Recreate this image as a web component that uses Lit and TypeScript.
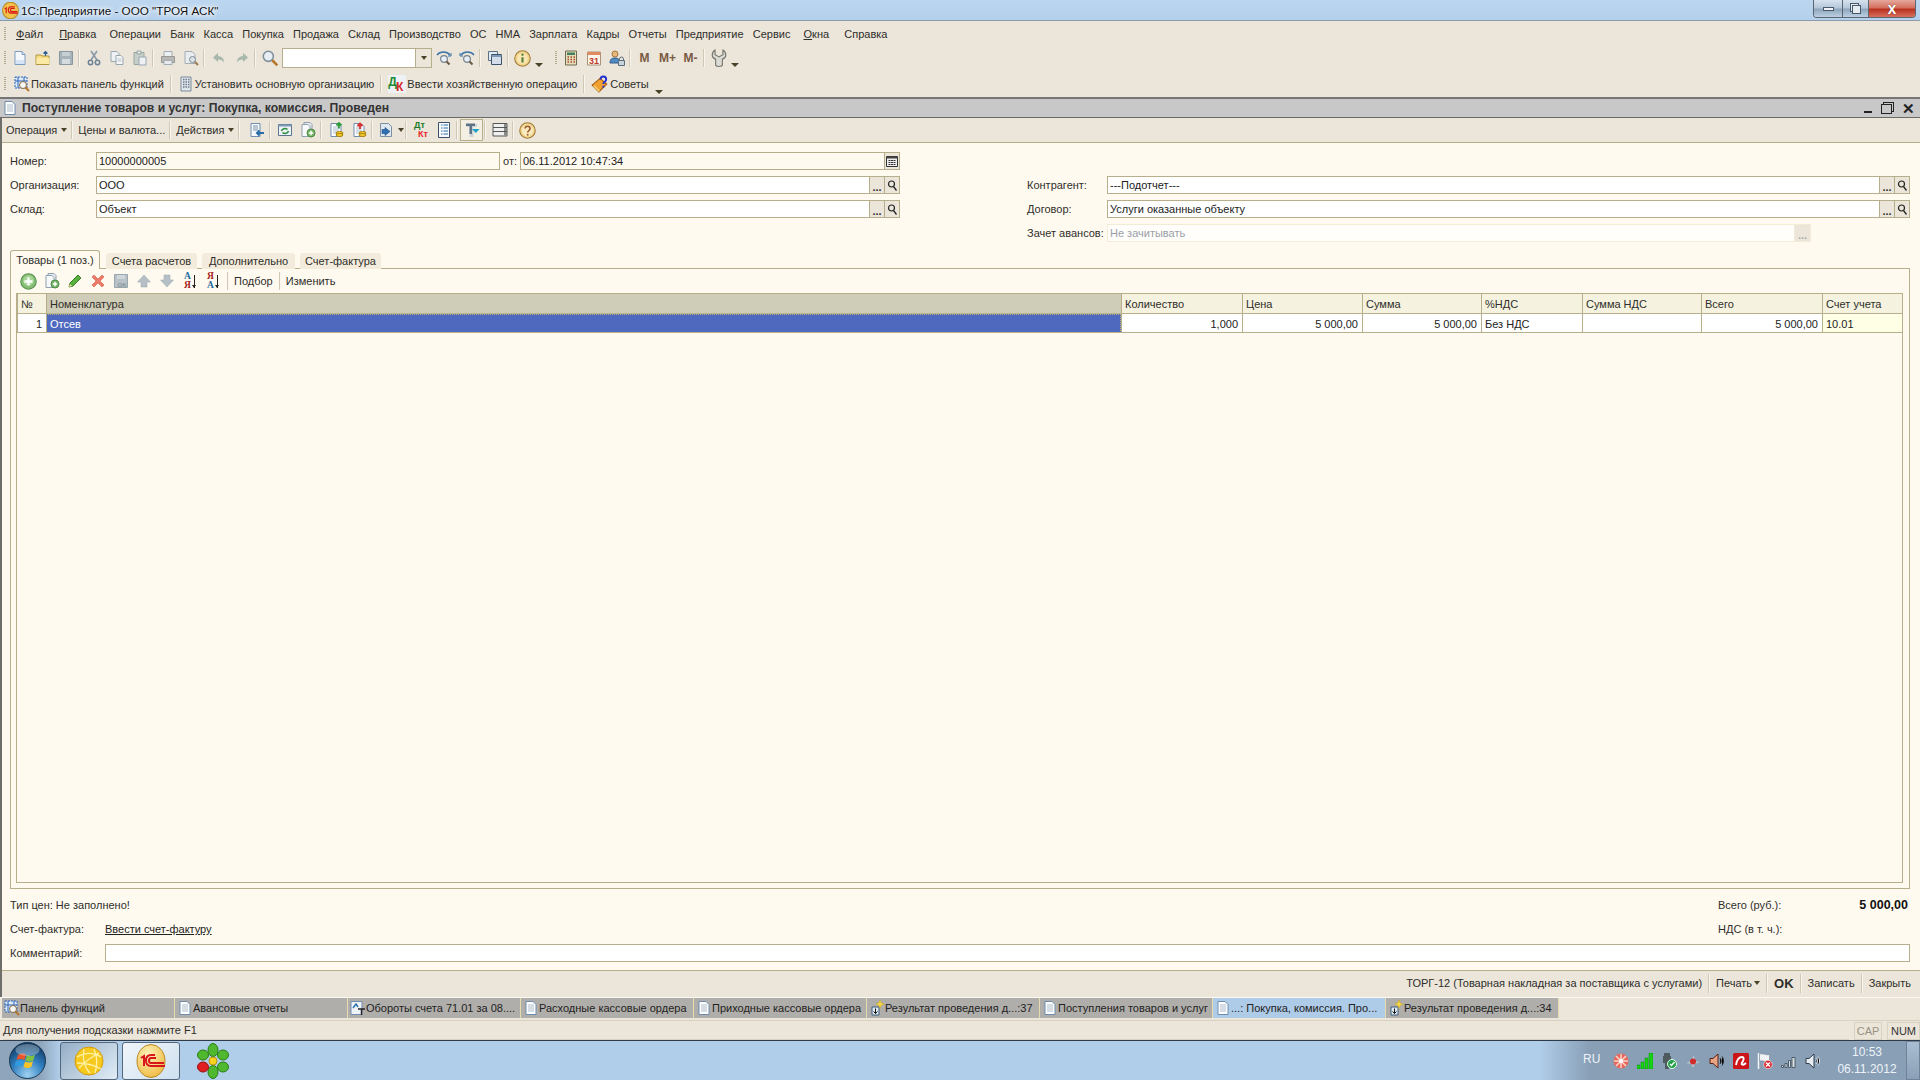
import { LitElement, html, css, svg, SVGTemplateResult } from 'lit';
import { customElement } from 'lit/decorators.js';

const ic = (body: SVGTemplateResult, size = 16) =>
  html`<svg width=${size} height=${size} viewBox="0 0 16 16" fill="none">${body}</svg>`;

const pageLines = svg`<path d="M3 1.5h7l3 3v10H3z" fill="#fdfeff" stroke="#6f8dae"/><path d="M5 5h6M5 7h6M5 9h6M5 11h6" stroke="#aebccb"/>`;
const coins = svg`<ellipse cx="11.5" cy="11" rx="3.5" ry="1.5" fill="#f3c92e" stroke="#a98510"/><ellipse cx="11.5" cy="13" rx="3.5" ry="1.5" fill="#f3c92e" stroke="#a98510"/>`;
const funcPanel = svg`<path d="M1 1h12v11H1z" fill="#dce9f8" stroke="#2a62b8" stroke-dasharray="2 1"/><path d="M4 1v11M10 1v11M1 5h12" stroke="#2a62b8"/><circle cx="9" cy="9" r="3.5" fill="#f4f6f8" stroke="#8a6a3a"/><path d="M11.5 11.5L15 15" stroke="#b5762a" stroke-width="2"/>`;
const magnifier = svg`<circle cx="6.5" cy="6.5" r="4.5" fill="#e7eef5" stroke="#7f8f9c" stroke-width="1.4"/><path d="M10 10l4.5 4.5" stroke="#b5762a" stroke-width="2.2"/>`;
const result = svg`<path d="M3 7h7v8H3z" fill="#dfe9f2" stroke="#3c5e80"/><path d="M6.5 8.5v5M4.5 11.5l2 2 2-2" stroke="#111"/><path d="M11 0l1.2 3 3 1.2-3 1.2L11 8.4 9.8 5.4l-3-1.2 3-1.2z" fill="#f6d84a" stroke="#c9a520" stroke-width=".5"/>`;

const icons = {
  newDoc: ic(svg`<path d="M3 1.5h7l3 3v10H3z" fill="#f4f8fd" stroke="#7d9cbd"/><path d="M10 1.5v3h3" fill="#cfe0f2" stroke="#7d9cbd"/><path d="M4 10h8v4H4z" fill="#d6e5f5"/>`),
  open: ic(svg`<path d="M1 5h5l1 1h7v8.5H1z" fill="#f6dd83" stroke="#b2963e"/><path d="M1.5 8h13v6H1.5z" fill="#fbe9a6"/><path d="M10.5 6V1.5M8.5 3.5l2-2 2 2" stroke="#2f5f8f" stroke-width="1.2"/>`),
  save: ic(svg`<path d="M1.5 1.5h13v13h-13z" fill="#a7b3ba" stroke="#8a979f"/><path d="M4 2h8v4H4z" fill="#c5ced3"/><path d="M4 9h8v5H4z" fill="#d4dbdf"/>`),
  cut: ic(svg`<path d="M5 1l6 9M11 1L5 10" stroke="#8a9aa8" stroke-width="1.6"/><circle cx="4.5" cy="12.5" r="2.2" stroke="#6e8296" stroke-width="1.5"/><circle cx="11.5" cy="12.5" r="2.2" stroke="#6e8296" stroke-width="1.5"/>`),
  copy: ic(svg`<path d="M2 1.5h6l2 2v8H2z" fill="#eef1f3" stroke="#98a6b0"/><path d="M7 5.5h5l2 2v7H7z" fill="#f5f7f8" stroke="#98a6b0"/><path d="M8.5 9h4M8.5 11h4" stroke="#b5c0c8"/>`),
  paste: ic(svg`<path d="M2 2.5h10v12H2z" fill="#c7cfc9" stroke="#98a6a6"/><path d="M5 1h4v3H5z" fill="#e2e6e6" stroke="#98a6a6"/><path d="M7 7h7v8H7z" fill="#eef2f4" stroke="#98a6b0"/>`),
  print: ic(svg`<path d="M4 1.5h8v5H4z" fill="#eceff1" stroke="#a3adb3"/><path d="M1.5 6.5h13v6h-13z" fill="#b9b7b4" stroke="#99999a"/><path d="M4 10.5h8v4H4z" fill="#e8eaec" stroke="#a3adb3"/>`),
  preview: ic(svg`<path d="M2 1.5h7l3 3v9H2z" fill="#e9edf0" stroke="#a3adb3"/><circle cx="9.5" cy="9.5" r="3" fill="#dbe3e8" stroke="#7d8a93"/><path d="M12 12l3 3" stroke="#9a7a4a" stroke-width="2"/>`),
  undo: ic(svg`<path d="M7 3L2 7.5 7 12V9.5c3 0 5 1 6 3 0-4-2-6-6-6.5z" fill="#a9b8ad"/>`),
  redo: ic(svg`<path d="M9 3l5 4.5L9 12V9.5c-3 0-5 1-6 3 0-4 2-6 6-6.5z" fill="#a9b8ad"/>`),
  search: ic(magnifier, 18),
  findNext: ic(svg`<path d="M1 5c3-4 10-4 13 0" stroke="#3d74a8" stroke-width="1.3"/><path d="M15 3v3h-3" stroke="#3d74a8"/><circle cx="8" cy="9" r="3.4" fill="#e7eef5" stroke="#76848f" stroke-width="1.2"/><path d="M10.5 11.5l3 3" stroke="#6a5a44" stroke-width="2"/>`),
  findPrev: ic(svg`<path d="M2 5c3-4 10-4 13 0" stroke="#3d74a8" stroke-width="1.3"/><path d="M1 3v3h3" stroke="#3d74a8"/><circle cx="8" cy="9" r="3.4" fill="#e7eef5" stroke="#76848f" stroke-width="1.2"/><path d="M10.5 11.5l3 3" stroke="#6a5a44" stroke-width="2"/>`),
  windows: ic(svg`<path d="M1.5 1.5h9v9h-9z" fill="#e5ebf2" stroke="#5b7088"/><path d="M4.5 4.5h10v10h-10z" fill="#d3deea" stroke="#3e536b"/><path d="M4.5 5h10v2h-10z" fill="#7f9ab8"/>`),
  info: ic(svg`<circle cx="8" cy="8" r="7.3" fill="#f3d68e" stroke="#a27a3a"/><circle cx="8" cy="8" r="5" fill="#f8e6b4"/><path d="M8 6.8v5" stroke="#58803a" stroke-width="2"/><circle cx="8" cy="4.4" r="1.1" fill="#58803a"/>`, 17),
  calc: ic(svg`<path d="M2.5 1h11v14h-11z" fill="#e6dcb8" stroke="#6f6a50"/><path d="M4 2.5h8V5H4z" fill="#3f8060"/><path d="M4.5 7H6M7.5 7H9M10.5 7H12M4.5 9.5H6M7.5 9.5H9M10.5 9.5H12M4.5 12H6M7.5 12H9M10.5 12H12" stroke="#a34a2a" stroke-width="1.4"/>`),
  calendar: ic(svg`<path d="M1.5 2h13v13h-13z" fill="#fff8ea" stroke="#a8927a"/><path d="M1.5 2h13v3h-13z" fill="#e08a60"/><text x="8" y="14" font-family="Liberation Sans" font-size="9" font-weight="bold" fill="#c0392b" text-anchor="middle">31</text>`),
  users: ic(svg`<circle cx="6" cy="4" r="3" fill="#e9b77a" stroke="#a4753f"/><path d="M1 13c0-4 2-5 5-5s5 1 5 5z" fill="#4f89c4" stroke="#305e8c"/><path d="M9.5 10.5h6v5h-6z" fill="#c9d3dc" stroke="#5c6d7c"/><path d="M10.5 10.5V9a2 2 0 0 1 4 0v1.5" stroke="#5c6d7c"/>`),
  wrench: ic(svg`<path d="M4.5 1v4L8 7l3.5-2V1c2 1 2.500 3 2.500 4.500S12.500 8.500 11 9v5c0 2-6 2-6 0V9C3.500 8.500 2 7 2 5.500 2 4 2.500 2 4.500 1z" fill="#dcdcd6" stroke="#77776f"/>`, 18),
  panel: ic(funcPanel),
  org: ic(svg`<path d="M3 1h10v14H3z" fill="#dfe5ec" stroke="#7d8a99"/><path d="M5 3.5h1.500M7.500 3.5H9M10 3.5h1.500M5 6h1.500M7.500 6H9M10 6h1.500M5 8.5h1.500M7.500 8.5H9M10 8.5h1.500M5 11h1.500M7.500 11H9M10 11h1.500" stroke="#6c7a8c" stroke-width="1.3"/>`),
  dk: html`<span class="glyph dk"><b class="dk-d">Д</b><b class="dk-k">К</b></span>`,
  tips: ic(svg`<path d="M1 9l7-6 6 5-7 7z" fill="#f0a030" stroke="#a55f10"/><path d="M2 10l5 5 1-1-5-5z" fill="#f7d070"/><path d="M8.500 4c0-3.500 5-3.500 5 0 0 2-2.500 2-2.500 4M11 9.500V11" stroke="#2030d0" stroke-width="1.7"/>`, 18),
  listBack: ic(svg`<path d="M2 1.500h9v13H2z" fill="#f6f8fa" stroke="#6f8dae"/><path d="M4 4h5M4 6h5M4 8h5" stroke="#7a93ad"/><path d="M15 11H8M10.500 8.500L8 11l2.500 2.500" stroke="#2a6ea8" stroke-width="2"/>`),
  refresh: ic(svg`<path d="M1.500 2.500h13v11h-13z" fill="#edf2f6" stroke="#5c7690"/><path d="M1.500 2.500h13v2h-13z" fill="#7f9ab8"/><path d="M4.500 9a3.500 3 0 0 1 6-1.500M11.500 9a3.500 3 0 0 1-6 1.500" stroke="#2f8f3f" stroke-width="1.5"/>`),
  pagePlus: ic(svg`<path d="M4 .5h6l2 2v9H4z" fill="#e7ebee" stroke="#8fa0ae"/><path d="M2 2.500h6l2 2v10H2z" fill="#f8f9fa" stroke="#8fa0ae"/><circle cx="11" cy="11" r="4" fill="#78b468" stroke="#4b8a43"/><path d="M11 8.800v4.400M8.800 11h4.400" stroke="#fff" stroke-width="1.4"/>`),
  coinUp: ic(svg`${pageLines}${coins}<path d="M11 6.500V1M8.500 3.500L11 1l2.500 2.500" stroke="#2a9a3a" stroke-width="1.8"/>`),
  coinDown: ic(svg`${pageLines}${coins}<path d="M9 7V1.500M6.500 4L9 1.500 11.500 4" stroke="#d83030" stroke-width="1.8"/>`),
  docArrow: ic(svg`<path d="M1.500 1.500h8l3 3v10h-11z" fill="#dfe7ef" stroke="#7d8fa2"/><path d="M6 5.500l5 4-5 4v-2H3v-4h3z" fill="#2f6eb0" stroke="#1d4f85" stroke-width=".6"/>`),
  dtKt: html`<span class="glyph dtkt"><b class="dt">Дт</b><b class="kt">Кт</b></span>`,
  listDoc: ic(svg`<path d="M2.500 .5h11v15h-11z" fill="#f7f9fb" stroke="#3b4f68"/><path d="M5 3h1.500M7.500 3H12M5 6h1.500M7.500 6H12M5 9h1.500M7.500 9H12M5 12h1.500M7.500 12H12" stroke="#2a6ea8"/>`),
  totals: ic(svg`<path d="M2 2h11v3H9.500v10h-4V5H2z" fill="#cfd4d8"/><path d="M2 1.500h9V4H8v8H5.500V4H2z" fill="#5e7386"/><path d="M8 7h7.500l-3.700 4z" fill="#18a0c8"/>`),
  stack: ic(svg`<path d="M1 1.500h14v4H1zM1 5.500h14v4H1zM1 9.500h14V14H1z" fill="#f0f0ee" stroke="#55565a"/><path d="M12 2h3v3h-3zM12 6h3v3h-3zM12 10h3v3.500h-3z" fill="#8a8a88"/>`),
  help: ic(svg`<circle cx="8" cy="8" r="7.3" fill="#f3d68e" stroke="#a27a3a"/><circle cx="8" cy="8" r="5.2" fill="#f9e9bf"/><path d="M5.800 6.200c0-3 4.600-3 4.600 0 0 2-2.200 1.800-2.200 3.600" stroke="#9a5a2a" stroke-width="1.5"/><circle cx="8.200" cy="12" r=".9" fill="#9a5a2a"/>`, 17),
  add: ic(svg`<circle cx="8" cy="8" r="7.3" fill="#86bd74" stroke="#5b9452"/><circle cx="8" cy="7" r="5" fill="#a6d596"/><path d="M8 4.200v7.600M4.200 8h7.600" stroke="#fff" stroke-width="2.2"/>`, 17),
  edit: ic(svg`<path d="M2 14l1-4 8-8 3 3-8 8z" fill="#58b03e" stroke="#3a8226"/><path d="M2 14l1-3 2 2z" fill="#f3e0a8"/>`),
  remove: ic(svg`<path d="M2 4l2-2 4 4 4-4 2 2-4 4 4 4-2 2-4-4-4 4-2-2 4-4z" fill="#ec7b68" stroke="#d05a48" stroke-width=".6"/>`),
  saveOk: ic(svg`<path d="M1.500 1.500h13v13h-13z" fill="#b8c2c8" stroke="#9aa6ad"/><path d="M4 2h8v4H4z" fill="#d0d7db"/><text x="9" y="14" font-family="Liberation Sans" font-size="6" font-weight="bold" fill="#8a969d" text-anchor="middle">OK</text>`),
  up: ic(svg`<path d="M8 2l6.500 7H11v5H5V9H1.500z" fill="#b5c0c6" stroke="#a3afb6" stroke-width=".6"/>`),
  down: ic(svg`<path d="M8 14l6.500-7H11V2H5v5H1.500z" fill="#b5c0c6" stroke="#a3afb6" stroke-width=".6"/>`),
  sortAz: html`<span class="glyph sort"><span><i class="s-b">А</i><i class="s-r">Я</i></span><em></em></span>`,
  sortZa: html`<span class="glyph sort"><span><i class="s-r">Я</i><i class="s-b">А</i></span><em></em></span>`,
  page: ic(pageLines),
  chart: ic(svg`<path d="M1 1.500h11v13H1z" fill="#eef3f8" stroke="#6f8dae"/><path d="M3 8l3-4 2 3" stroke="#2a6ea8" stroke-width="1.4"/><path d="M8 9h7M11.500 9v6" stroke="#222" stroke-width="1.4"/>`),
  result: ic(result),
  orb: html`<svg width="37" height="37" viewBox="0 0 37 37"><defs><radialGradient id="o" cx=".5" cy=".9" r=".9"><stop offset="0" stop-color="#9fd2f2"/><stop offset=".5" stop-color="#2f7fc0"/><stop offset="1" stop-color="#0e3358"/></radialGradient></defs><circle cx="18.500" cy="18.500" r="18" fill="url(#o)" stroke="#1d3850"/><path d="M9 13c3-2 5-2 8-.5l-1.500 5.500c-3-1.500-5-1.500-8 0z" fill="#e8552d"/><path d="M18 13c3 1.500 5 1.500 8-.5L24.500 18c-3 2-5 2-8 .5z" fill="#7fc241"/><path d="M7 19c3-1.500 5-1.500 8 0l-1.500 5.500c-3-1.500-5-1.500-8 0z" fill="#2f9ae0"/><path d="M16 19.500c3 1.500 5 1.500 8-.5l-1.500 5.500c-3 2-5 2-8 .5z" fill="#f5c428"/><ellipse cx="18.500" cy="8" rx="12" ry="6" fill="#fff" opacity=".3"/></svg>`,
  sphere: html`<svg width="30" height="30" viewBox="0 0 30 30"><circle cx="15" cy="15" r="14" fill="#f5c91e" stroke="#d59a10"/><path d="M3 11c7-4 16-5 24 0M5 22c6-6 14-12 20-15M10 3c-2 8 0 18 6 24M20 3c3 7 4 14 1 24M3 17c9 0 17 2 24 6" stroke="#fff1a8" stroke-width="1.3" fill="none"/></svg>`,
  oneC: html`<svg width="30" height="34" viewBox="0 0 30 34"><defs><radialGradient id="e" cx=".4" cy=".3" r=".8"><stop offset="0" stop-color="#fff3b8"/><stop offset="1" stop-color="#eeb63c"/></radialGradient></defs><ellipse cx="15" cy="17" rx="14" ry="16.500" fill="url(#e)" stroke="#b88a28"/><path d="M5 14l3-2v10M19 11h-4c-4 0-5 3-5 5.500S11 22 15 22h14M20 14h-5c-2 0-2 2-2 2.500s0 2.500 2 2.500h13" stroke="#d8161b" stroke-width="2" fill="none"/></svg>`,
  icq: html`<svg width="32" height="36" viewBox="0 0 32 36"><g fill="#4fb82e" stroke="#2a7d17"><ellipse cx="16" cy="7" rx="5" ry="6.500"/><ellipse cx="26" cy="12" rx="5.500" ry="5"/><ellipse cx="26" cy="24" rx="5.500" ry="5"/><ellipse cx="16" cy="29" rx="5" ry="6.500"/><ellipse cx="6" cy="12" rx="5.500" ry="5"/></g><ellipse cx="6" cy="24" rx="5.500" ry="5" fill="#e02020" stroke="#9a1010"/><circle cx="16" cy="18" r="4" fill="#f7d21e" stroke="#b59510"/></svg>`,
  trayFlower: html`<svg width="16" height="16" viewBox="0 0 16 16"><circle cx="8" cy="8" r="7.500" fill="#e9675a"/><g stroke="#fbd6cc" stroke-width="1.5"><path d="M8 1v14M1 8h14M3 3l10 10M13 3L3 13"/></g><circle cx="8" cy="8" r="2" fill="#fff"/></svg>`,
  trayBars: html`<svg width="16" height="16" viewBox="0 0 16 16"><path d="M0 12h3v4H0zM4 9h3v7H4zM8 5h3v11H8zM12 0h4v16h-4z" fill="#14d414" stroke="#0a8c0a" stroke-width=".5"/></svg>`,
  trayUsb: html`<svg width="16" height="16" viewBox="0 0 16 16"><path d="M3 0h6v3h1v7H8v6H4v-6H2V3h1z" fill="#4d5a5e"/><circle cx="11" cy="11" r="4.500" fill="#23a04a" stroke="#e6ffe8"/><path d="M9 11l1.500 1.500L13.500 9" stroke="#fff" stroke-width="1.3" fill="none"/></svg>`,
  trayBolt: html`<svg width="16" height="16" viewBox="0 0 16 16"><path d="M1 10l5-2 3-6 1 6 5 1-5 2-2 4-2-4z" fill="#b8c4cc"/><circle cx="8" cy="8.500" r="3" fill="#d22b2b"/></svg>`,
  traySpeakerRed: html`<svg width="16" height="16" viewBox="0 0 16 16"><path d="M1 5.500h3L9 1v14l-5-4.500H1z" fill="#e8a585" stroke="#5a2015"/><path d="M11 5c1.500 2 1.500 4 0 6M13 3.500c2 3 2 6 0 9" stroke="#2a2a2a"/></svg>`,
  trayAvira: html`<svg width="16" height="16" viewBox="0 0 16 16"><rect width="16" height="16" rx="1.500" fill="#cc1518"/><path d="M3 12c1-6 4-8 6-8 2 0 2 2 1 4-1 2-2 3-1 3.500 1 .5 2.500 0 4-1.500" stroke="#fff" stroke-width="1.9" fill="none"/></svg>`,
  trayFlag: html`<svg width="16" height="16" viewBox="0 0 16 16"><path d="M1.500 0v16" stroke="#f4f4f4" stroke-width="1.5"/><path d="M2.500 1c4-1 6 1.500 10 .5v7c-4 1-6-1.500-10-.5z" fill="#f0f2f4" stroke="#70808c" stroke-width=".5"/><circle cx="11" cy="11.500" r="4.300" fill="#d82a32" stroke="#fff" stroke-width=".6"/><path d="M9 9.500l4 4M13 9.500l-4 4" stroke="#fff" stroke-width="1.4"/></svg>`,
  traySignal: html`<svg width="16" height="16" viewBox="0 0 16 16"><path d="M.5 12.500h2v2h-2zM4 10.500h2v4H4zM7.500 7.500h2v7h-2zM11 4.500h3v10h-3z" fill="#d8dfe5" stroke="#3a4752" stroke-width=".8"/></svg>`,
  traySpeaker: html`<svg width="16" height="16" viewBox="0 0 16 16"><path d="M1 5.500h3L9 1v14l-5-4.500H1z" fill="#e6edf3" stroke="#323e48"/><path d="M11 5c1.500 2 1.500 4 0 6M13 3.500c2 3 2 6 0 9" stroke="#e8eef2"/></svg>`,
  logo: html`<svg width="17" height="17" viewBox="0 0 16 16"><ellipse cx="8" cy="8" rx="7.500" ry="7.800" fill="#f2c14a" stroke="#b88a28"/><path d="M2.500 6.500l1.500-1v5M12 4.500H8.500c-2 0-2.500 1.500-2.500 3s.5 3 2.500 3H15M12 6H9c-1 0-1 1-1 1.500s0 1.500 1 1.500h5.500" stroke="#d8161b" stroke-width="1.1" fill="none"/></svg>`,
  findField: html`<svg width="11" height="11" viewBox="0 0 11 11"><circle cx="4.500" cy="4" r="3" stroke="#222" stroke-width="1.2" fill="none"/><path d="M6.500 6.500l3 4" stroke="#222" stroke-width="1.3"/></svg>`,
  dateField: html`<svg width="12" height="12" viewBox="0 0 12 12"><path d="M.5 1.500h11v10H.5z" fill="#eee" stroke="#333"/><path d="M.5 1.500h11v2H.5z" fill="#444"/><path d="M2.500 5.500h2M5 5.500h2M7.500 5.500h2M2.500 7.500h2M5 7.500h2M7.500 7.500h2M2.500 9.500h2M5 9.500h2M7.500 9.500h2" stroke="#333"/></svg>`,
};

const menu: [string, string][] = [
  ['Ф', 'айл'], ['П', 'равка'], ['', 'Операции'], ['', 'Банк'], ['', 'Касса'], ['', 'Покупка'], ['', 'Продажа'], ['', 'Склад'],
  ['', 'Производство'], ['', 'ОС'], ['', 'НМА'], ['', 'Зарплата'], ['', 'Кадры'], ['', 'Отчеты'], ['', 'Предприятие'], ['', 'Сервис'],
  ['О', 'кна'], ['', 'Справка'],
];

const columns = [
  { title: '№', value: '1', cls: 'num' },
  { title: 'Номенклатура', value: 'Отсев', cls: 'sel' },
  { title: 'Количество', value: '1,000', cls: 'right' },
  { title: 'Цена', value: '5 000,00', cls: 'right' },
  { title: 'Сумма', value: '5 000,00', cls: 'right' },
  { title: '%НДС', value: 'Без НДС', cls: '' },
  { title: 'Сумма НДС', value: '', cls: '' },
  { title: 'Всего', value: '5 000,00', cls: 'right' },
  { title: 'Счет учета', value: '10.01', cls: 'last' },
];

const tasks = [
  { icon: icons.panel, text: 'Панель функций' },
  { icon: icons.page, text: 'Авансовые отчеты' },
  { icon: icons.chart, text: 'Обороты счета 71.01 за 08....' },
  { icon: icons.page, text: 'Расходные кассовые ордера' },
  { icon: icons.page, text: 'Приходные кассовые ордера' },
  { icon: icons.result, text: 'Результат проведения д...:37' },
  { icon: icons.page, text: 'Поступления товаров и услуг' },
  { icon: icons.page, text: '...: Покупка, комиссия. Про...', active: true },
  { icon: icons.result, text: 'Результат проведения д...:34' },
];

const tray = [
  icons.trayFlower, icons.trayBars, icons.trayUsb, icons.trayBolt, icons.traySpeakerRed,
  icons.trayAvira, icons.trayFlag, icons.traySignal, icons.traySpeaker,
];

@customElement('app-root')
export class AppRoot extends LitElement {
  static styles = css`
    :host {
      display: flex;
      flex-direction: column;
      width: 1920px;
      height: 1080px;
      overflow: hidden;
      background: #ebe5da;
      font-family: "Liberation Sans", Arial, sans-serif;
      font-size: 11px;
      color: #2e2e2a;
    }
    svg { display: block; flex: none; }

    .title {
      height: 20px;
      flex: none;
      display: flex;
      align-items: center;
      padding-left: 2px;
      gap: 2px;
      background: linear-gradient(#bcd6ef, #b4d0ec);
      border-bottom: 1px solid #8b9bab;
      font-size: 11.7px;
      color: #111;
    }
    .title-text { text-shadow: 0 0 6px #fff, 0 0 6px #fff, 0 0 3px #fff; }
    .winbtns {
      margin-left: auto;
      margin-right: 4px;
      align-self: flex-start;
      display: flex;
      height: 17px;
      border: 1px solid #5c6672;
      border-top: 0;
      border-radius: 0 0 4px 4px;
      overflow: hidden;
    }
    .winbtn {
      display: flex;
      align-items: center;
      justify-content: center;
      background: linear-gradient(#d6e2ee 0, #b6c8da 45%, #8fa6bc 55%, #bcd0e2 100%);
      border-right: 1px solid #5c6672;
    }
    .winbtn.min { width: 28px; }
    .winbtn.max { width: 25px; }
    .winbtn.close {
      width: 46px;
      border: 0;
      background: linear-gradient(#e6a79c 0, #d4705e 45%, #b93220 55%, #d8705c 100%);
    }
    .min-bar { width: 11px; height: 4px; background: #f0f4f8; border: 1px solid #48586a; box-sizing: border-box; }
    .max-box { width: 7px; height: 7px; margin: 2px 0 0 2px; border: 1px solid #48586a; background: #e4ecf2; box-shadow: -2px -2px 0 -1px #e4ecf2, -2px -2px 0 0 #48586a; }
    .close-x { font-weight: bold; font-size: 16px; line-height: 14px; color: #fff; text-shadow: 0 0 1px #4a1010; }

    .menu {
      height: 25px;
      flex: none;
      display: flex;
      align-items: center;
      padding-left: 3px;
    }
    .grip {
      flex: none;
      width: 2px;
      height: 14px;
      margin: 0 1px;
      background: repeating-linear-gradient(#b0a98f 0 1px, transparent 1px 2px);
    }
    .menu-items { display: flex; margin-left: 9px; gap: 9.15px; }
    .menu-items span:nth-child(1) { margin-right: 7px; }
    .menu-items span:nth-child(2) { margin-right: 4px; }
    .menu-items span:nth-child(16) { margin-right: 4px; }
    .menu-items span:nth-child(17) { margin-right: 6px; }

    .bar { display: flex; align-items: center; flex: none; }
    .tb1 { height: 24px; padding-left: 3px; }
    .tb2 { height: 27px; padding-left: 3px; }
    .tb1 .grip { margin-right: 2px; }
    .tb2 .grip { margin-right: 4px; }
    .btn {
      flex: none;
      width: 23px;
      height: 22px;
      display: flex;
      align-items: center;
      justify-content: center;
      box-sizing: border-box;
    }
    .btn.pressed { background: #f3efe2; border: 1px solid #b7ae8c; }
    .sep { flex: none; width: 1px; height: 18px; margin: 0 2px 0 1px; background: #cfc8b4; border-right: 1px solid #f8f5ee; }
    .sep.wide { margin-right: 5px; }
    .tb1 .grip.gap-grip { margin-left: 11px; }
    .mem { font-weight: bold; font-size: 12px; color: #7a5a42; }
    .find {
      flex: none;
      width: 148px;
      height: 18px;
      margin-left: 1px;
      display: flex;
      justify-content: flex-end;
      background: #fff;
      border: 1px solid #b7ae8c;
    }
    .find-drop {
      width: 15px;
      display: flex;
      align-items: center;
      justify-content: center;
      background: #ebe5da;
      border-left: 1px solid #b7ae8c;
    }
    .arr { width: 0; height: 0; border: 3px solid transparent; border-top: 4px solid #4a4226; border-bottom: 0; flex: none; }
    .low-arr { width: 10px; align-self: flex-end; padding-bottom: 3px; display: flex; justify-content: center; flex: none; }
    .low-arr i { display: block; width: 0; height: 0; border: 4px solid transparent; border-top: 4px solid #4a4226; border-bottom: 0; }

    .t2-item { display: flex; align-items: center; gap: 1px; padding: 0 5px 0 4px; }
    .glyph { display: flex; flex: none; width: 18px; height: 18px; font-family: "Liberation Sans", sans-serif; }
    .dk { background: #eef2f6; font-size: 12px; }
    .dk-d { color: #1d8a32; }
    .dk-k { color: #d8271f; margin-top: 5px; margin-left: -1px; }
    .dtkt { flex-direction: column; font-size: 9px; line-height: 9px; align-items: center; }
    .dt { color: #1f7a28; margin-right: 3px; }
    .kt { color: #e8262a; margin-left: 4px; }
    .sort { width: 17px; margin-left: 4px; font-size: 9.5px; line-height: 8px; font-family: "Liberation Serif", serif; font-weight: bold; }
    .sort span { display: flex; flex-direction: column; }
    .sort i { font-style: normal; display: block; height: 9px; }
    .s-b { color: #1c6a9c; }
    .s-r { color: #a81c20; }
    .sort em { display: block; position: relative; width: 1px; height: 13px; margin: 3px 0 0 3px; background: #222; }
    .sort em::after { content: ""; position: absolute; left: -2px; bottom: 0; border: 2.5px solid transparent; border-top: 3px solid #222; border-bottom: 0; }

    .window {
      flex: 1;
      min-height: 0;
      display: flex;
      flex-direction: column;
      border-left: 2px solid #6e6e6a;
    }
    .doc-head {
      height: 18px;
      flex: none;
      display: flex;
      align-items: center;
      background: #c8c8c8;
      border-top: 2px solid #767676;
      border-bottom: 1px solid #6b6b66;
      margin-left: -2px;
      padding-left: 2px;
      padding-right: 5px;
      font-weight: bold;
      font-size: 12.2px;
      color: #333;
      gap: 4px;
    }
    .doc-btns { margin-left: auto; display: flex; align-items: center; gap: 7px; }
    .doc-min { width: 8px; height: 2px; margin-top: 8px; background: #222; }
    .doc-max { width: 9px; height: 8px; margin: 2px 0 0 2px; border: 1px solid #222; box-shadow: 2px -2px 0 -1px #c8c8c8, 2px -2px 0 0 #222; }
    .doc-x { font-size: 15px; line-height: 15px; font-weight: bold; color: #222; margin-left: 3px; }
    .doc-tb {
      height: 24px;
      flex: none;
      padding-left: 1px;
      border-bottom: 1px solid #b7ae8c;
    }
    .tx { display: flex; align-items: center; gap: 4px; padding: 0 3px; white-space: nowrap; }

    .form {
      flex: 1;
      min-height: 0;
      display: flex;
      flex-direction: column;
      box-sizing: border-box;
      padding: 9px 8px 0 8px;
      background: #fffaf0;
      border-bottom: 1px solid #b7ae8c;
    }
    .form > * { margin-right: 2px; }
    .head {
      flex: none;
      display: grid;
      grid-template-columns: 890px 1fr;
      column-gap: 127px;
    }
    .col { display: flex; flex-direction: column; gap: 6px; }
    .row { display: flex; align-items: center; height: 18px; }
    .lbl { flex: none; width: 86px; }
    .lbl.wide { width: 80px; white-space: nowrap; }
    .field {
      flex: 1;
      min-width: 0;
      height: 18px;
      box-sizing: border-box;
      display: flex;
      align-items: center;
      padding-left: 2px;
      background: #fff;
      border: 1px solid #b7ae8c;
      color: #222;
      white-space: nowrap;
    }
    .field.cream { background: #fffaf0; }
    .field.off { background: #fffefb; border-color: #f2ebd8; color: #9aa0a8; }
    .fbtn {
      flex: none;
      width: 15px;
      height: 18px;
      box-sizing: border-box;
      display: flex;
      align-items: center;
      justify-content: center;
      background: #ebe5da;
      border: 1px solid #b7ae8c;
      border-left: 0;
      font-size: 11px;
    }
    .fbtn.dots { align-items: flex-end; font-weight: bold; line-height: 12px; }
    .fbtn.off { border: 1px solid #f2ebd8; border-left: 0; color: #aaa; width: 16px; }
    .num-field { flex: none; width: 404px; }
    .ot { flex: none; width: 20px; text-align: center; }
    .zachet { padding-right: 99px; }

    .tabs { flex: none; display: flex; align-items: flex-end; height: 18px; margin-top: 9px; margin-bottom: -1px; position: relative; z-index: 1; }
    .tab {
      height: 16px;
      box-sizing: border-box;
      display: flex;
      align-items: center;
      justify-content: center;
      margin-left: 5px;
      background: #f3ecdc;
      border-radius: 3px 3px 0 0;
    }
    .tab.on {
      height: 19px;
      margin-left: 0;
      margin-right: 1px;
      background: #fffaf0;
      border: 1px solid #b7ae8c;
      border-bottom: 0;
    }
    .panel {
      flex: 1;
      min-height: 0;
      display: flex;
      flex-direction: column;
      box-sizing: border-box;
      padding: 0 6px 5px 5px;
      border: 1px solid #b7ae8c;
    }
    .tab-tb { height: 24px; padding-left: 1px; }
    .tab-tb .sep { margin: 0 2px 0 3px; }
    .tab-tb .btn .sort { margin-left: 4px; margin-right: -2px; }
    .table {
      flex: 1;
      min-height: 0;
      border: 1px solid #b7ae8c;
      border-top: 0;
      display: grid;
      grid-template-columns: 29px 1075px 121px 120px 119px 101px 119px 121px 1fr;
      grid-template-rows: 21px 19px;
      align-content: start;
    }
    .th, .td {
      display: flex;
      align-items: center;
      padding: 0 3px;
      box-sizing: border-box;
      white-space: nowrap;
      border-bottom: 1px solid #b7ae8c;
      border-left: 1px solid #b7ae8c;
    }
    .th { background: #f5f2df; border-top: 1px solid #b7ae8c; }
    .th.sel { background: #cfccb7; }
    .td { background: #fff; color: #222; padding-top: 1px; }
    .td.right, .td.num { justify-content: flex-end; padding-right: 4px; }
    .td.sel { background: #4f69bf; color: #fff; outline: 1px dotted #bfb27a; outline-offset: -1px; }
    .td.last { background: #ffffe6; }

    .foot {
      flex: none;
      display: grid;
      grid-template-columns: 95px 1fr 102px 90px;
      grid-auto-rows: 18px;
      row-gap: 6px;
      align-items: center;
      padding: 7px 0 8px 0;
    }
    .foot .span2 { grid-column: span 2; }
    .foot .sum { font-weight: bold; font-size: 12.5px; text-align: right; padding-right: 2px; color: #111; }
    .foot a { color: #222; text-decoration: underline; }
    .foot .comment { grid-column: 2 / 5; }

    .cmd {
      height: 26px;
      flex: none;
      box-sizing: border-box;
      padding: 0 6px 2px 0;
      display: flex;
      align-items: center;
      justify-content: flex-end;
    }
    .cmd .tx { gap: 2px; }
    .cmd .ok { font-weight: bold; font-size: 13px; }
    .cmd .sep { height: 19px; margin: 0 3px; }

    .tasks {
      height: 23px;
      flex: none;
      display: flex;
      align-items: flex-start;
      padding-left: 2px;
      border-top: 1px solid #fbf9f4;
      box-sizing: border-box;
    }
    .task {
      width: 173px;
      height: 20px;
      flex: none;
      box-sizing: border-box;
      display: flex;
      align-items: center;
      padding-left: 2px;
      background: #b0aeaa;
      border-right: 1px solid #e6dcae;
      white-space: nowrap;
      overflow: hidden;
      color: #222;
    }
    .task.on { background: #aecbe8; }

    .status {
      height: 20px;
      flex: none;
      display: flex;
      align-items: center;
      gap: 5px;
      padding-left: 3px;
      box-sizing: border-box;
      border-top: 1px solid #d8d2c2;
    }
    .status-main { flex: 1; height: 18px; display: flex; align-items: center; border-bottom: 1px solid #d8d2c2; }
    .key { width: 28px; height: 18px; display: flex; align-items: center; justify-content: center; border: 1px solid #d8d2c2; box-sizing: border-box; color: #98937f; }
    .key.num { width: 33px; color: #333; }

    .taskbar {
      height: 40px;
      flex: none;
      display: flex;
      align-items: center;
      box-sizing: border-box;
      border-top: 1px solid #2e3b4a;
      background: linear-gradient(90deg, #8ea5bb 0, #8ea5bb 40px, #b0cde9 60px, #b0cde9 1540px, #889fb6 1590px, #889fb6 100%);
    }
    .orb { flex: none; width: 60px; display: flex; justify-content: center; padding-right: 6px; box-sizing: border-box; }
    .app {
      flex: none;
      width: 58px;
      height: 38px;
      margin-right: 4px;
      box-sizing: border-box;
      display: flex;
      align-items: center;
      justify-content: center;
      border: 1px solid #55677a;
      border-radius: 3px;
      background: linear-gradient(135deg, #94aec6, #e0ecf6);
    }
    .app.on { background: linear-gradient(135deg, #f0f5fa, #cfe0f0); }
    .app.plain { border: 0; background: none; }
    .tray { margin-left: auto; display: flex; align-items: center; height: 100%; }
    .lang { width: 30px; color: #eef3f8; font-size: 12px; margin-top: -4px; }
    .tray-icons { display: flex; gap: 8px; }
    .clock { width: 78px; text-align: center; color: #eef3f8; font-size: 12px; line-height: 17px; margin: 1px 0 0 7px; }
    .desk { width: 14px; height: 100%; box-sizing: border-box; border: 1px solid #6f8297; background: linear-gradient(#a9bed2, #8aa0b6); }
  `;

  private sep(wide = false) {
    return html`<i class="sep ${wide ? 'wide' : ''}"></i>`;
  }

  private btns(...list: unknown[]) {
    return list.map((i) => html`<span class="btn">${i}</span>`);
  }

  private lowArrow() {
    return html`<span class="low-arr"><i></i></span>`;
  }

  render() {
    return html`
      <div class="title">
        ${icons.logo}
        <span class="title-text">1С:Предприятие - ООО "ТРОЯ АСК"</span>
        <div class="winbtns">
          <span class="winbtn min"><i class="min-bar"></i></span>
          <span class="winbtn max"><i class="max-box"></i></span>
          <span class="winbtn close"><span class="close-x">x</span></span>
        </div>
      </div>

      <div class="menu">
        <i class="grip"></i>
        <div class="menu-items">
          ${menu.map(([u, rest]) => html`<span>${u ? html`<u>${u}</u>` : ''}${rest}</span>`)}
        </div>
      </div>

      <div class="bar tb1">
        <i class="grip"></i>
        ${this.btns(icons.newDoc, icons.open, icons.save)}${this.sep()}
        ${this.btns(icons.cut, icons.copy, icons.paste)}${this.sep()}
        ${this.btns(icons.print, icons.preview)}${this.sep()}
        ${this.btns(icons.undo, icons.redo)}${this.sep()}
        ${this.btns(icons.search)}
        <div class="find"><span class="find-drop"><i class="arr"></i></span></div>
        ${this.btns(icons.findNext, icons.findPrev)}${this.sep()}
        ${this.btns(icons.windows)}${this.sep()}
        ${this.btns(icons.info)}${this.lowArrow()}
        <i class="grip gap-grip"></i>
        ${this.btns(icons.calc, icons.calendar, icons.users)}${this.sep()}
        ${this.btns(html`<span class="mem">M</span>`, html`<span class="mem">M+</span>`, html`<span class="mem">M-</span>`)}${this.sep()}
        ${this.btns(icons.wrench)}${this.lowArrow()}
      </div>

      <div class="bar tb2">
        <i class="grip"></i>
        <span class="t2-item">${icons.panel}Показать панель функций</span>${this.sep()}
        <span class="t2-item">${icons.org}Установить основную организацию</span>${this.sep()}
        <span class="t2-item">${icons.dk}Ввести хозяйственную операцию</span>${this.sep()}
        <span class="t2-item">${icons.tips}Советы</span>${this.lowArrow()}
      </div>

      <div class="window">
        <div class="doc-head">
          ${icons.page}
          <span>Поступление товаров и услуг: Покупка, комиссия. Проведен</span>
          <span class="doc-btns"><i class="doc-min"></i><i class="doc-max"></i><span class="doc-x">✕</span></span>
        </div>

        <div class="bar doc-tb">
          <span class="tx">Операция <i class="arr"></i></span>${this.sep()}
          <span class="tx">Цены и валюта...</span>${this.sep()}
          <span class="tx">Действия <i class="arr"></i></span>${this.sep(true)}
          ${this.btns(icons.listBack)}${this.sep()}
          ${this.btns(icons.refresh, icons.pagePlus)}${this.sep()}
          ${this.btns(icons.coinUp, icons.coinDown)}${this.sep()}
          ${this.btns(icons.docArrow)}<i class="arr"></i>${this.sep()}
          ${this.btns(icons.dtKt, icons.listDoc)}${this.sep()}
          <span class="btn pressed">${icons.totals}</span>${this.sep()}
          ${this.btns(icons.stack)}${this.sep()}
          ${this.btns(icons.help)}
        </div>

        <div class="form">
          <div class="head">
            <div class="col">
              <div class="row">
                <span class="lbl">Номер:</span>
                <span class="field cream num-field">10000000005</span>
                <span class="ot">от:</span>
                <span class="field cream">06.11.2012 10:47:34</span>
                <span class="fbtn">${icons.dateField}</span>
              </div>
              <div class="row">
                <span class="lbl">Организация:</span>
                <span class="field">ООО</span>
                <span class="fbtn dots">...</span><span class="fbtn">${icons.findField}</span>
              </div>
              <div class="row">
                <span class="lbl">Склад:</span>
                <span class="field">Объект</span>
                <span class="fbtn dots">...</span><span class="fbtn">${icons.findField}</span>
              </div>
            </div>
            <div class="col">
              <div class="row"></div>
              <div class="row">
                <span class="lbl wide">Контрагент:</span>
                <span class="field">---Подотчет---</span>
                <span class="fbtn dots">...</span><span class="fbtn">${icons.findField}</span>
              </div>
              <div class="row">
                <span class="lbl wide">Договор:</span>
                <span class="field">Услуги оказанные объекту</span>
                <span class="fbtn dots">...</span><span class="fbtn">${icons.findField}</span>
              </div>
              <div class="row zachet">
                <span class="lbl wide">Зачет авансов:</span>
                <span class="field off">Не зачитывать</span>
                <span class="fbtn dots off">...</span>
              </div>
            </div>
          </div>

          <div class="tabs">
            <span class="tab on" style="width:90px">Товары (1 поз.)</span>
            <span class="tab" style="width:91px">Счета расчетов</span>
            <span class="tab" style="width:93px">Дополнительно</span>
            <span class="tab" style="width:81px">Счет-фактура</span>
          </div>
          <div class="panel">
            <div class="bar tab-tb">
              ${this.btns(icons.add, icons.pagePlus, icons.edit, icons.remove, icons.saveOk, icons.up, icons.down, icons.sortAz, icons.sortZa)}
              ${this.sep()}
              <span class="tx">Подбор</span>${this.sep()}
              <span class="tx">Изменить</span>
            </div>
            <div class="table">
              ${columns.map((c) => html`<div class="th ${c.cls === 'sel' ? 'sel' : ''}">${c.title}</div>`)}
              ${columns.map((c) => html`<div class="td ${c.cls}">${c.value}</div>`)}
            </div>
          </div>

          <div class="foot">
            <span class="span2">Тип цен: Не заполнено!</span>
            <span>Всего (руб.):</span>
            <span class="sum">5 000,00</span>
            <span>Счет-фактура:</span>
            <a>Ввести счет-фактуру</a>
            <span>НДС (в т. ч.):</span>
            <span></span>
            <span>Комментарий:</span>
            <span class="field comment"></span>
          </div>
        </div>

        <div class="cmd">
          <span class="tx">ТОРГ-12 (Товарная накладная за поставщика с услугами)</span>${this.sep()}
          <span class="tx">Печать <i class="arr"></i></span>${this.sep()}
          <span class="tx ok">OK</span>${this.sep()}
          <span class="tx">Записать</span>${this.sep()}
          <span class="tx">Закрыть</span>
        </div>
      </div>

      <div class="tasks">
        ${tasks.map((t) => html`<div class="task ${t.active ? 'on' : ''}">${t.icon}<span>${t.text}</span></div>`)}
      </div>

      <div class="status">
        <span class="status-main">Для получения подсказки нажмите F1</span>
        <span class="key">CAP</span>
        <span class="key num">NUM</span>
      </div>

      <div class="taskbar">
        <span class="orb">${icons.orb}</span>
        <span class="app">${icons.sphere}</span>
        <span class="app on">${icons.oneC}</span>
        <span class="app plain">${icons.icq}</span>
        <div class="tray">
          <span class="lang">RU</span>
          <div class="tray-icons">${tray}</div>
          <div class="clock">10:53<br />06.11.2012</div>
          <span class="desk"></span>
        </div>
      </div>
    `;
  }
}
